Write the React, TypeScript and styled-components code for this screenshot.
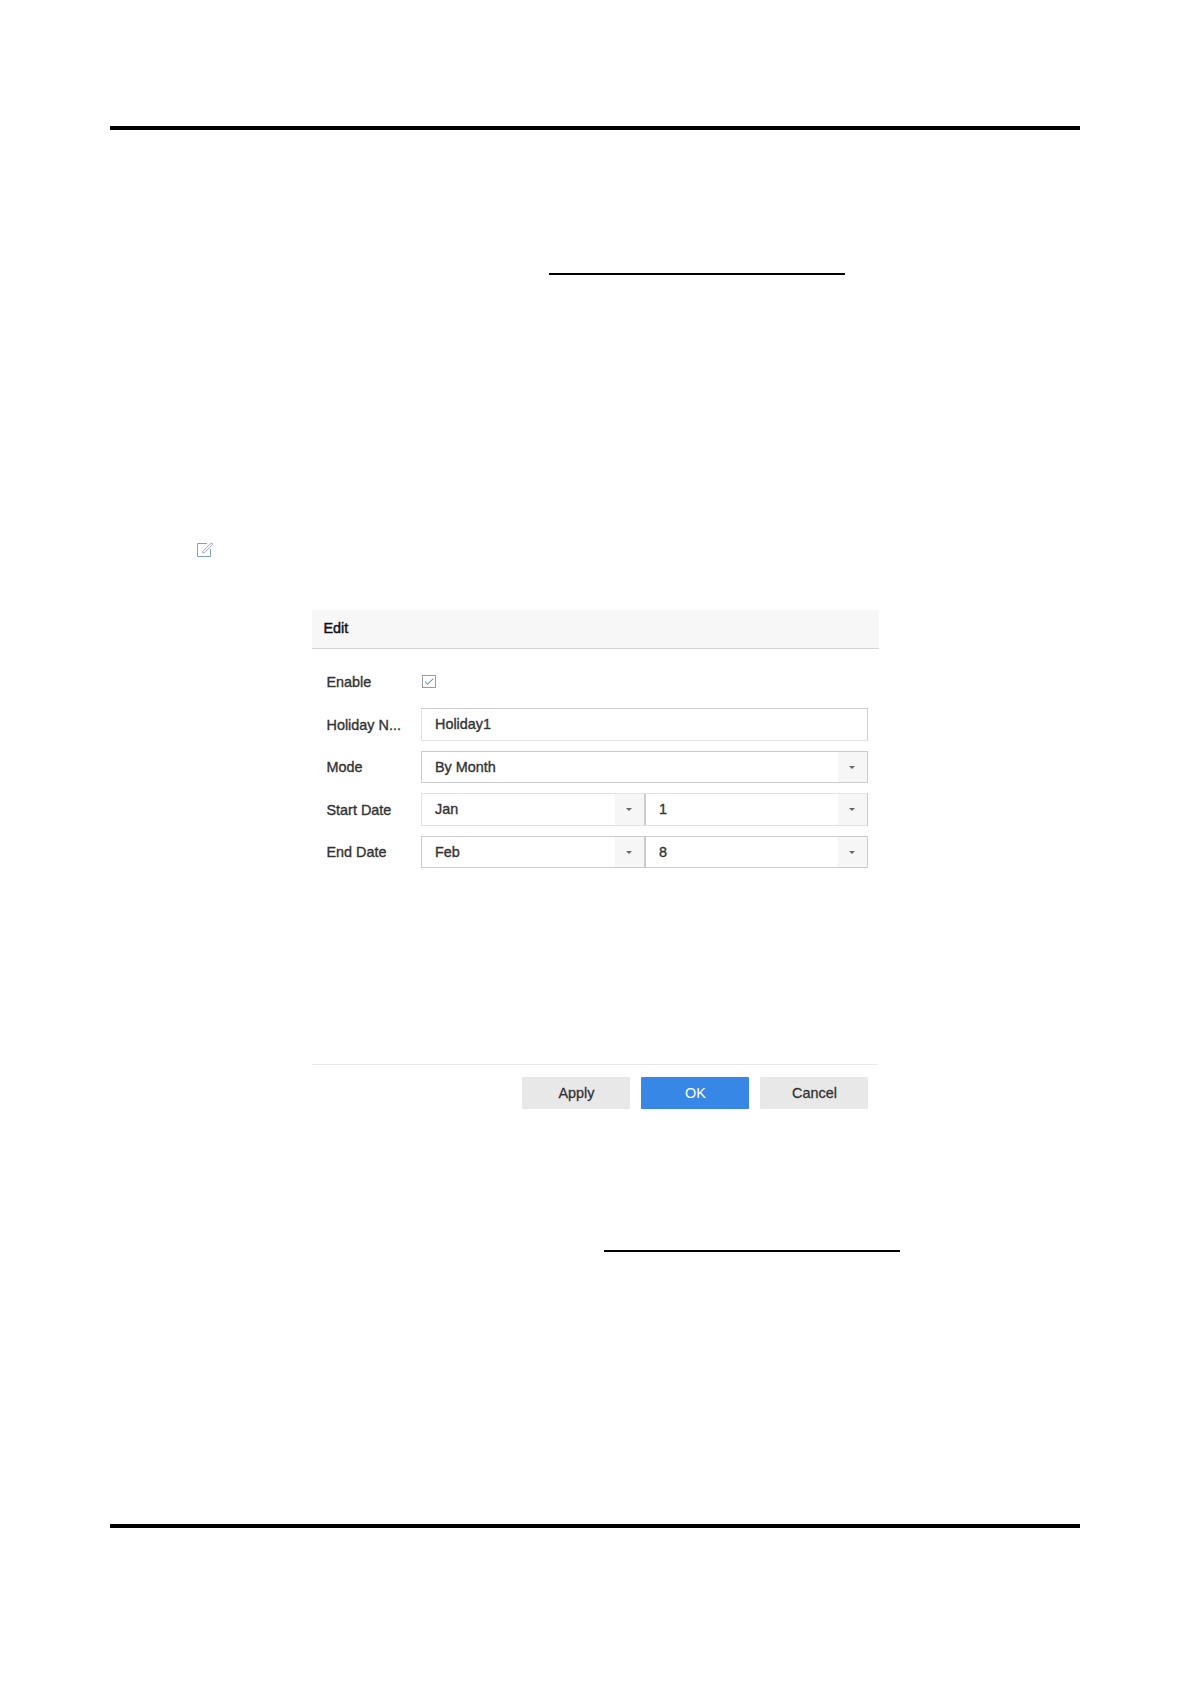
import { useState } from "react"
import styled, { createGlobalStyle } from "styled-components"

const GlobalStyle = createGlobalStyle`
    *{
        box-sizing: border-box;
    }

    body{
        margin: 0;
        background: #fff;
        font-family: "Liberation Sans", Arial, sans-serif;
    }
`

const StylePage = styled.main`
    display: flex;
    flex-direction: column;
    width: 1191px;
    height: 1684px;
    padding: 126px 111px 0 110px;
    background: #fff;
`

const PageRule = styled.hr<{ $top?: number }>`
    width: 970px;
    height: 4px;
    margin: ${({ $top = 0 }) => $top}px 0 0;
    border: none;
    background: #000;
`

const LinkRule = styled.hr<{ $top: number, $left: number }>`
    width: 296px;
    height: 2px;
    margin: ${({ $top, $left }) => `${$top}px 0 0 ${$left}px`};
    border: none;
    background: #000;
`

const EditIcon = styled.svg`
    width: 17px;
    height: 16px;
    margin: 267px 0 0 87px;
    flex: none;
`

const StyleDialog = styled.section`
    display: flex;
    flex-direction: column;
    width: 567px;
    height: 499px;
    margin: 52px 0 0 202px;
    flex: none;
    font-size: 14.4px;
    color: #333;
    -webkit-text-stroke: .35px currentColor;
`

const DialogHeader = styled.header`
    height: 39px;
    padding-left: 11.5px;
    background: #f7f7f7;
    border-bottom: 1px solid #d4d4d4;
    line-height: 36px;
    color: #111;
    -webkit-text-stroke: .45px currentColor;
`

const DialogForm = styled.form`
    display: flex;
    flex-direction: column;
    gap: 10px;
    flex: 1;
    padding: 16px 11px 0 14px;
`

const FormRow = styled.div<{ $height: number }>`
    display: flex;
    align-items: center;
    height: ${({ $height }) => $height}px;
`

const RowLabel = styled.label`
    width: 95px;
    padding-left: .5px;
    line-height: 18px;
    white-space: nowrap;
`

const CheckBox = styled.button`
    display: flex;
    width: 14px;
    height: 13px;
    margin-left: 1px;
    padding: 0;
    background: #fff;
    border: 1px solid #999ba6;
    cursor: pointer;

    & svg{
        width: 12px;
        height: 11px;
    }
`

const FieldGroup = styled.div<{ $border: string }>`
    display: flex;
    flex: 1;
    height: 100%;
    border-width: 1px;
    border-style: solid;
    border-color: ${({ $border }) => $border};
    border-right-color: #ccc;
`

const Field = styled.div`
    display: flex;
    flex: 1;
    padding-left: 13px;

    & + &{
        flex: 0 0 223px;
        border-left: 2px solid #ccc;
        padding-left: 13px;
    }
`

const FieldValue = styled.span`
    flex: 1;
    align-self: center;
    margin-bottom: 1px;
    line-height: 18px;
`

const FieldArrow = styled.span`
    display: flex;
    align-items: center;
    justify-content: center;
    width: 29px;
    padding-right: 1px;
    background: #f6f6f6;

    &::before{
        content: "";
        border: 3.5px solid transparent;
        border-top-color: #666;
        border-bottom: none;
    }
`

const DialogFooter = styled.footer`
    display: flex;
    justify-content: flex-end;
    gap: 11px;
    margin-right: 2px;
    padding: 12px 9px 0 0;
    border-top: 1px solid #e8e8e8;
`

const FooterButton = styled.button<{ $primary?: boolean }>`
    width: 108px;
    height: 32px;
    padding: 0 0 0 1px;
    border: none;
    border-radius: 1px;
    background: ${({ $primary }) => $primary ? "#3787e7" : "#e8e8e8"};
    color: ${({ $primary }) => $primary ? "#fff" : "#333"};
    font: inherit;
    -webkit-text-stroke: ${({ $primary }) => $primary ? "0" : ".3px currentColor"};
    cursor: pointer;
`

interface HolidayField {
    label: string
    values: string[]
    height: number
    border: string
    isSelect: boolean
}

const fields: HolidayField[] = [
    { label: "Holiday N...", values: ["Holiday1"], height: 33, border: "#ccc #e2e2e2 #e2e2e2", isSelect: false },
    { label: "Mode", values: ["By Month"], height: 32, border: "#ccc", isSelect: true },
    { label: "Start Date", values: ["Jan", "1"], height: 33, border: "#e2e2e2", isSelect: true },
    { label: "End Date", values: ["Feb", "8"], height: 32, border: "#ccc", isSelect: true },
]

const HolidayDialog = () => {

    const [isEnabled, setIsEnabled] = useState(true)

    return (
        <StyleDialog>
            <DialogHeader>Edit</DialogHeader>

            <DialogForm>
                <FormRow $height={33}>
                    <RowLabel>Enable</RowLabel>
                    <CheckBox type="button" onClick={() => setIsEnabled(!isEnabled)}>
                        {isEnabled && (
                            <svg viewBox="0 0 12 11" fill="none" stroke="#6f93d2" strokeWidth="1.1">
                                <path d="M2 5.6 4.6 8.1 10.4 2.6" />
                            </svg>
                        )}
                    </CheckBox>
                </FormRow>

                {fields.map(({ label, values, height, border, isSelect }) => (
                    <FormRow key={label} $height={height}>
                        <RowLabel>{label}</RowLabel>
                        <FieldGroup $border={border}>
                            {values.map((value) => (
                                <Field key={value}>
                                    <FieldValue>{value}</FieldValue>
                                    {isSelect && <FieldArrow />}
                                </Field>
                            ))}
                        </FieldGroup>
                    </FormRow>
                ))}
            </DialogForm>

            <DialogFooter>
                <FooterButton>Apply</FooterButton>
                <FooterButton $primary>OK</FooterButton>
                <FooterButton>Cancel</FooterButton>
            </DialogFooter>
        </StyleDialog>
    )
}

const App = () => (
    <>
        <GlobalStyle />
        <StylePage>
            <PageRule />
            <LinkRule $top={143} $left={439} />

            <EditIcon viewBox="0 0 17 16" fill="none">
                <path d="M10 1.5H.5v13h13V7" stroke="#7f9fd8" />
                <path d="M5.8 9.2 14 1.2 16 2 8 10.2 5.5 10.8Z" stroke="#a9a6dc" strokeWidth="1" />
            </EditIcon>

            <HolidayDialog />

            <LinkRule $top={141} $left={494} />
            <PageRule $top={272} />
        </StylePage>
    </>
)

export default App
